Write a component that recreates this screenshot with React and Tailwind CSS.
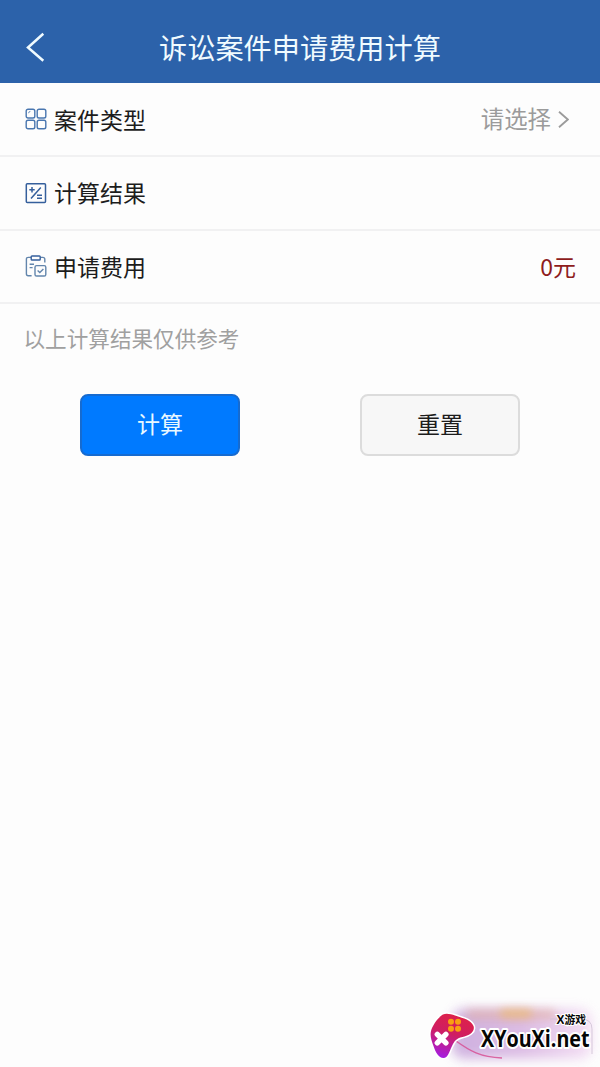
import React from 'react';

/* ── Row icons ───────────────────────────────────────────────────────────── */
const GridIcon = () => (
  <svg className="h-[22px] w-[22px]" viewBox="0 0 22 22" fill="none" stroke="#4a77b0" strokeWidth="1.4">
    <rect x="1.2" y="1.2" width="8.6" height="8.8" rx="1.8" />
    <rect x="12.2" y="1.2" width="8.6" height="8.8" rx="1.8" />
    <rect x="1.2" y="12.2" width="8.6" height="8.6" rx="1.8" />
    <rect x="12.2" y="12.2" width="8.6" height="8.6" rx="1.8" />
    <path d="M3.6 5.2q0-1.8 1.8-1.8" strokeWidth="0.8" />
  </svg>
);

const ResultIcon = () => (
  <svg className="h-[22px] w-[22px]" viewBox="0 0 22 22" fill="none" stroke="#355f9c" strokeWidth="1.5">
    <rect x="1.3" y="1.7" width="19.2" height="18.8" rx="1" />
    <path d="M4.3 7.8h5.4M7 5.1v5.4M6 16.6 15.8 5.6M12 13.2h5M12 16.2h5" />
  </svg>
);

const FeeIcon = () => (
  <svg className="h-[22px] w-[22px]" viewBox="0 0 22 22" fill="none" stroke="#6285ac" strokeWidth="1.4">
    <path d="M6 2.4H3.4Q1.4 2.4 1.4 4.2v14.6q0 2 1.8 2H6.6M15.6 2.4h2.2Q19.8 2.4 19.8 4.2v3.2" />
    <rect x="6.2" y="1" width="9" height="4" rx="0.8" stroke="#355f9c" />
    <path d="M4.6 9.2h4.4M4.6 12.6h3" />
    <rect x="10" y="10.6" width="10.8" height="10.4" rx="1.6" />
    <path d="m12.6 15.6 2.2 2 3.6-3.6" />
  </svg>
);

/* ── List row: icon and label on the left, value on the right ────────────── */
const Row = ({ icon: Icon, label, children }) => (
  <div className="flex h-[73.6px] items-center justify-between border-b-2 border-[#f1f1f2] pr-6 pl-[25.4px]">
    <div className="flex items-center gap-[6.6px]">
      <Icon />
      <span className="text-[23px] leading-none text-[#1c1c1c]">{label}</span>
    </div>
    {children}
  </div>
);

/* ── Site mark in the bottom corner ──────────────────────────────────────── */
const SiteMark = () => (
  <div className="absolute right-0 bottom-0 h-[70px] w-[180px] overflow-hidden">
    <div className="absolute top-[12px] left-[32px] h-[50px] w-[140px] rounded-xl bg-gradient-to-r from-[#c9a8dc] via-[#d9b6e2] to-[#f3dcf3] opacity-90 blur-[6px]" />
    <div className="absolute top-[13px] left-[46px] h-[9px] w-[90px] rounded-full bg-[#dfa898] opacity-60 blur-[5px]" />
    <div className="absolute top-[12px] left-[80px] h-[9px] w-[32px] rounded-full bg-[#eebb60] opacity-60 blur-[4px]" />
    <svg className="absolute inset-0 h-full w-full" viewBox="0 0 180 70">
      <defs>
        <linearGradient id="pad" x1="0.6" y1="0" x2="0.3" y2="1">
          <stop offset="0" stopColor="#de2148" />
          <stop offset="0.45" stopColor="#cf1e62" />
          <stop offset="1" stopColor="#a51de0" />
        </linearGradient>
      </defs>
      <path d="M36 44C50 54 60 60 82 61" fill="none" stroke="#d7498f" strokeWidth="1.5" opacity="0.8" />
      <path d="M130 22h31q11 0 11 10v25" fill="none" stroke="#cdbfd3" strokeWidth="0.8" />
      <path
        d="M23 17.5C26 16 31 17 35 18.5C42 21 51 22.5 53.5 29C55.5 35 48.5 39 42.5 40C36 41.5 34.5 44 32 49C29 55 28 61 23.5 61C18.5 61 15.5 55 13.5 49C11.5 43.5 9.8 39 11 34C12.5 28 19 19.5 23 17.5Z"
        fill="url(#pad)"
        stroke="#fff"
        strokeWidth="3"
        paintOrder="stroke"
      />
      <path d="m17.3 37.3 8.6 8.6M25.9 37.3l-8.6 8.6" stroke="#fff" strokeWidth="5.4" strokeLinecap="round" />
      <g fill="#f9a011">
        <circle cx="31" cy="24.7" r="3" />
        <circle cx="38" cy="24.7" r="3" />
        <circle cx="31" cy="31.7" r="3" />
        <circle cx="38" cy="31.7" r="3" />
      </g>
    </svg>
    <div className="relative flex flex-col items-end pt-[17px] pr-[14px] text-[#050505]">
      <span className="flex h-[11px] items-center text-[10.8px] leading-none font-bold [paint-order:stroke] [-webkit-text-stroke:2px_#fff]">
        <span className="text-[12px] leading-none font-['Open_Sans',sans-serif]">X</span>
        游戏
      </span>
      <svg className="-mr-[6px] h-[32px] w-[118px] overflow-visible" viewBox="0 0 118 32">
        <text
          className="font-['Open_Sans',sans-serif] font-bold"
          transform="translate(7 22) scale(0.822 1)"
          fontSize="24"
          fill="#050505"
          stroke="#fff"
          strokeWidth="4"
          strokeLinejoin="round"
          paintOrder="stroke"
        >
          XYouXi.net
        </text>
      </svg>
    </div>
  </div>
);

const App = () => (
  <div className="relative flex h-[1067px] w-[600px] flex-col overflow-hidden bg-[#fdfdfd] font-['Noto_Sans_CJK_SC',sans-serif]">
    {/* ── Header ── */}
    <header className="grid h-[83.4px] shrink-0 grid-cols-[60px_1fr_60px] items-center bg-[#2c62aa] pt-[11.6px] text-[#f0fbff]">
      <svg className="ml-[25px] h-[30px] w-5" viewBox="0 0 20 30" fill="none" stroke="currentColor" strokeWidth="2.5">
        <path d="M18.3 1.7 3 15.5l15.3 13.3" />
      </svg>
      <h1 className="pb-px text-center text-[28.2px] leading-none">诉讼案件申请费用计算</h1>
    </header>

    <main>
      <Row icon={GridIcon} label="案件类型">
        <div className="flex items-center gap-[7px] pr-[7px] text-[#9b9b9b]">
          <span className="text-[23.4px] leading-none">请选择</span>
          <svg className="h-[17px] w-[11px]" viewBox="0 0 11 17" fill="none" stroke="currentColor" strokeWidth="1.8">
            <path d="m1 0.8 8.8 7.7L1 16.2" />
          </svg>
        </div>
      </Row>
      <Row icon={ResultIcon} label="计算结果" />
      <Row icon={FeeIcon} label="申请费用">
        <span className="text-[23px] leading-none text-[#8e1c1c]">0元</span>
      </Row>

      <p className="mt-[22.8px] pl-[23.5px] text-[21.6px] leading-none text-[#a0a0a0]">以上计算结果仅供参考</p>

      <div className="mt-[45.4px] flex gap-[120px] px-20">
        <button className="h-[62px] flex-1 rounded-lg border-2 border-[#166bd0] bg-[#007aff] pb-0.5 text-[23px] leading-none text-[#e9f8ff]">
          计算
        </button>
        <button className="h-[62px] flex-1 rounded-lg border-2 border-[#dcdcdc] bg-[#f7f7f7] pb-0.5 text-[23px] leading-none text-[#1c1c1c]">
          重置
        </button>
      </div>
    </main>

    <SiteMark />
  </div>
);

export default App;
